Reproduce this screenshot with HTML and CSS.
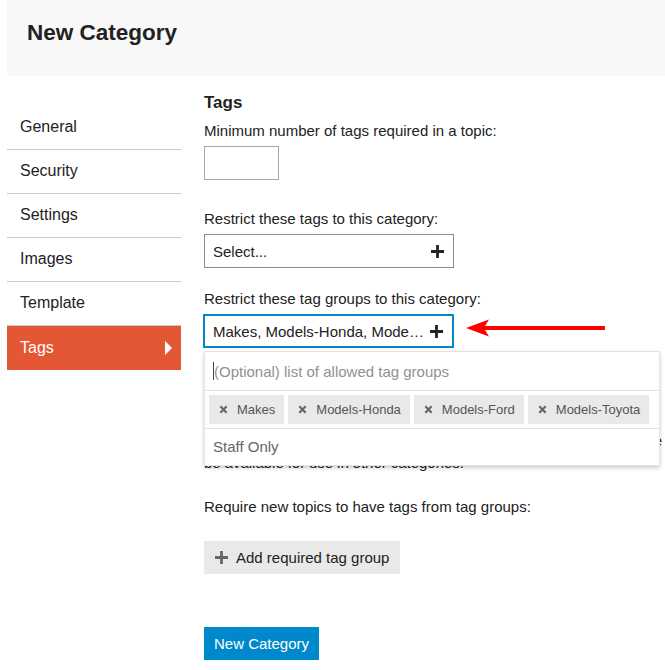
FILE: index.html
```html
<!DOCTYPE html>
<html>
    <head>
        <title>New Category</title>
        <link rel="stylesheet" href="styles.css">
    </head>
    <body>
        <div class="page-header">
            <h1>New Category</h1>
        </div>
        <div class="edit-category">
            <ul class="nav-stacked">
                <li><a href="#">General</a></li>
                <li><a href="#">Security</a></li>
                <li><a href="#">Settings</a></li>
                <li><a href="#">Images</a></li>
                <li><a href="#">Template</a></li>
                <li class="active"><a href="#">Tags</a></li>
            </ul>
            <div class="edit-tab">
                <h2>Tags</h2>
                <label class="field-label">Minimum number of tags required in a topic:</label>
                <input type="text" class="min-tags">

                <label class="field-label spaced">Restrict these tags to this category:</label>
                <div class="chooser">
                    <span class="chooser-value">Select...</span>
                    <svg class="plus" viewBox="0 0 14 14"><path d="M5.5 0h3v5.5H14v3H8.5V14h-3V8.5H0v-3h5.5z"/></svg>
                </div>

                <label class="field-label spaced-sm">Restrict these tag groups to this category:</label>
                <div class="chooser-wrap">
                    <div class="chooser is-open">
                        <span class="chooser-value">Makes, Models-Honda, Models-Ford, Models-Toyota</span>
                        <svg class="plus" viewBox="0 0 14 14"><path d="M5.5 0h3v5.5H14v3H8.5V14h-3V8.5H0v-3h5.5z"/></svg>
                    </div>
                    <svg class="callout" viewBox="0 0 142 20">
                        <path d="M1 10 L24 1.5 L20 8 L140 8 L140 12 L20 12 L24 18.5 Z" fill="#f00"/>
                    </svg>
                    <div class="chooser-dropdown">
                        <div class="filter-row">
                            <span class="caret"></span><span class="placeholder">(Optional) list of allowed tag groups</span>
                        </div>
                        <div class="selected-row">
                            <span class="chip"><svg class="chip-x" viewBox="0 0 10 10"><path d="M1.5 1.5l7 7M8.5 1.5l-7 7"/></svg>Makes</span>
                            <span class="chip"><svg class="chip-x" viewBox="0 0 10 10"><path d="M1.5 1.5l7 7M8.5 1.5l-7 7"/></svg>Models-Honda</span>
                            <span class="chip"><svg class="chip-x" viewBox="0 0 10 10"><path d="M1.5 1.5l7 7M8.5 1.5l-7 7"/></svg>Models-Ford</span>
                            <span class="chip"><svg class="chip-x" viewBox="0 0 10 10"><path d="M1.5 1.5l7 7M8.5 1.5l-7 7"/></svg>Models-Toyota</span>
                        </div>
                        <div class="option-row">Staff Only</div>
                    </div>
                </div>

                <p class="hint">Tags and tag groups above stay in this category; they won't otherwise<br>be available for use in other categories.</p>

                <label class="field-label spaced-md">Require new topics to have tags from tag groups:</label>
                <button class="btn-default">
                    <svg class="plus grey" viewBox="0 0 14 14"><path d="M5.5 0h3v5.5H14v3H8.5V14h-3V8.5H0v-3h5.5z"/></svg>
                    Add required tag group
                </button>

                <div class="footer">
                    <button class="btn-primary">New Category</button>
                </div>
            </div>
        </div>
    </body>
</html>
```

FILE: styles.css
```css
body {
    margin: 0;
    font-family: "Liberation Sans", Arial, sans-serif;
    font-size: 15px;
    color: #222;
    background: #fff;
    overflow: hidden;
}
.page-header {
    margin-left: 7px;
    height: 76px;
    background-color: #f8f8f8;
    padding: 0 20px;
    display: flex;
    align-items: center;
}
.page-header h1 {
    margin: 0 0 10px 0;
    font-size: 22.5px;
    font-weight: bold;
    color: #222;
}
.edit-category {
    display: flex;
    padding-left: 7px;
}
.nav-stacked {
    list-style: none;
    margin: 30px 0 0 0;
    padding: 0;
    width: 174px;
    flex-shrink: 0;
}
.nav-stacked li {
    height: 44px;
    border-bottom: 1px solid #c8c8c8;
    box-sizing: border-box;
}
.nav-stacked li a {
    display: block;
    padding: 0 13px;
    line-height: 42px;
    font-size: 16px;
    color: #222;
    text-decoration: none;
}
.nav-stacked li.active {
    background-color: #e45735;
    border-bottom: none;
    position: relative;
}
.nav-stacked li.active a {
    color: #fff;
    line-height: 44px;
}
.nav-stacked li.active::after {
    content: "";
    position: absolute;
    right: 9px;
    top: 15px;
    border-left: 7px solid #fff;
    border-top: 7px solid transparent;
    border-bottom: 7px solid transparent;
}
.edit-tab {
    margin-left: 23px;
    width: 456px;
    padding-top: 16px;
}
.edit-tab h2 {
    margin: 0;
    font-size: 17px;
    line-height: 22px;
}
.field-label {
    display: block;
    line-height: 20px;
    margin: 7px 0 5px 0;
}
.field-label.spaced {
    margin-top: 29px;
}
.field-label.spaced-sm {
    margin-top: 21px;
}
.field-label.spaced-md {
    margin-top: 23px;
}
.min-tags {
    display: block;
    width: 75px;
    height: 34px;
    box-sizing: border-box;
    border: 1px solid #a8a8a8;
    margin: 0;
    padding: 4px 8px;
    font-size: 15px;
}
.chooser {
    width: 250px;
    height: 34px;
    box-sizing: border-box;
    border: 1px solid #8c8c8c;
    display: flex;
    align-items: center;
    padding: 0 9px 0 8px;
    gap: 4px;
    background: #fff;
}
.chooser-value {
    flex: 1;
    white-space: nowrap;
    overflow: hidden;
    text-overflow: ellipsis;
}
.chooser.is-open {
    border: 2px solid #0088cc;
    width: 251px;
    margin-left: -1px;
    padding-left: 8px;
}
.plus {
    width: 13px;
    height: 13px;
    fill: #222;
    flex-shrink: 0;
}
.plus.grey {
    fill: #666;
}
.chooser-wrap {
    position: relative;
}
.callout {
    position: absolute;
    left: 261px;
    top: 4px;
    width: 142px;
    height: 20px;
}
.chooser-dropdown {
    position: absolute;
    top: 37px;
    left: 0;
    width: 456px;
    box-sizing: border-box;
    background: #fff;
    border: 1px solid #e4e4e4;
    box-shadow: 0 2px 4px rgba(0, 0, 0, 0.2);
    z-index: 2;
}
.filter-row {
    height: 38px;
    border-bottom: 1px solid #e4e4e4;
    display: flex;
    align-items: center;
    padding-left: 8px;
}
.caret {
    width: 1px;
    height: 18px;
    background: #444;
}
.placeholder {
    color: #919191;
}
.selected-row {
    display: flex;
    gap: 4px;
    padding: 4px;
    border-bottom: 1px solid #e4e4e4;
}
.chip {
    background: #e9e9e9;
    color: #555;
    font-size: 13px;
    height: 29px;
    display: flex;
    align-items: center;
    padding: 0 9px 0 10px;
    white-space: nowrap;
    flex-shrink: 0;
}
.chip-x {
    width: 9px;
    height: 9px;
    stroke: #666;
    stroke-width: 2.4;
    fill: none;
    margin-right: 9px;
}
.option-row {
    height: 36px;
    line-height: 36px;
    padding-left: 8px;
    color: #666;
}
.hint {
    margin: 82px 0 0 0;
    line-height: 22px;
    white-space: nowrap;
    word-spacing: -0.3px;
}
.btn-default {
    margin-top: 24px;
    height: 33px;
    border: none;
    background-color: #e9e9e9;
    color: #222;
    font-family: inherit;
    font-size: 15px;
    padding: 0 11px;
    display: flex;
    align-items: center;
    gap: 8px;
    cursor: pointer;
}
.footer {
    margin-top: 53px;
}
.btn-primary {
    height: 33px;
    border: none;
    background-color: #0088cc;
    color: #fff;
    font-family: inherit;
    font-size: 15px;
    padding: 0 10px;
    cursor: pointer;
}
```
